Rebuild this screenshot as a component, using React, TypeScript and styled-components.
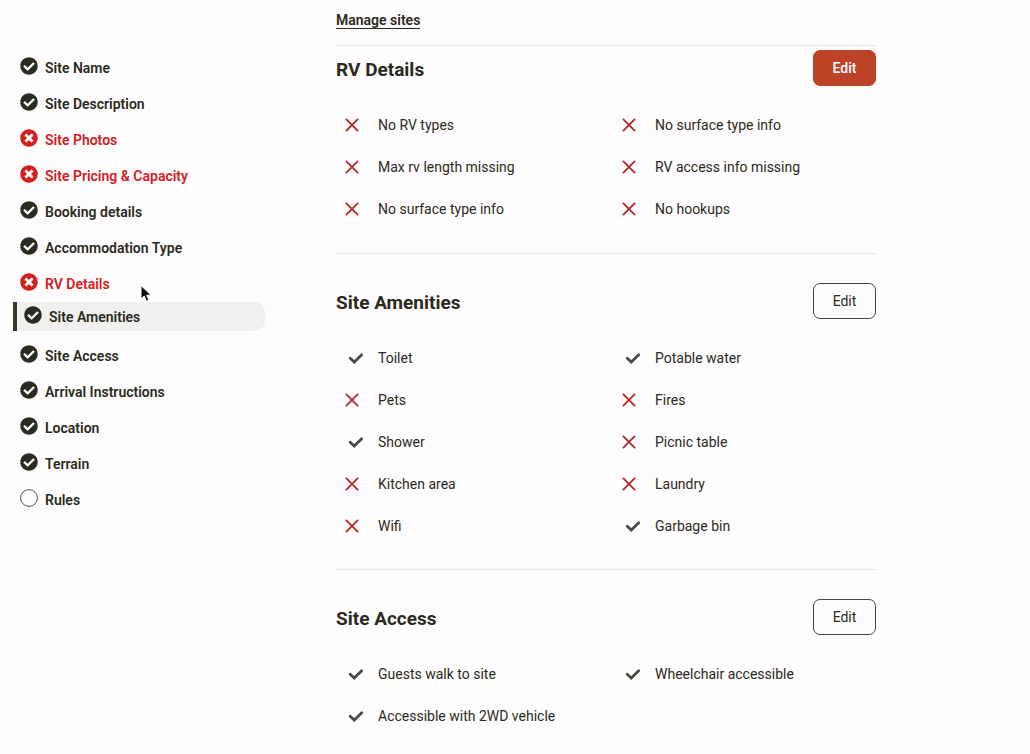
import React from "react";
import styled, { createGlobalStyle, css } from "styled-components";
import { FaCheckCircle, FaTimesCircle } from "react-icons/fa";

const ink = "#2b2a20";

const GlobalStyle = createGlobalStyle`
  *, *::before, *::after { box-sizing: border-box; }
  body {
    margin: 0;
    background: #fefcfd;
    color: ${ink};
    font-family: Roboto, "Liberation Sans", sans-serif;
    font-size: 14px;
  }
`;

const Page = styled.div`
  display: flex;
  align-items: flex-start;
  min-height: 100vh;
`;

const Sidebar = styled.nav`
  flex: none;
  width: 265px;
  margin-right: 71px;
  padding-top: 50px;
`;

const StepList = styled.ul`
  list-style: none;
  margin: 0;
  padding: 0;
`;

const Step = styled.li<{ $active?: boolean }>`
  height: 36px;
  padding-left: ${({ $active }) => ($active ? "13px" : "20px")};
`;

const StepLink = styled.a<{ $error?: boolean; $active?: boolean }>`
  display: flex;
  align-items: center;
  gap: 7px;
  height: 36px;
  color: ${({ $error }) => ($error ? "#d3201f" : ink)};
  font-weight: 600;
  line-height: 20px;
  text-decoration: none;
  white-space: nowrap;

  svg {
    flex: none;
    width: 18px;
    height: 18px;
    margin-bottom: 4px;
  }

  ${({ $active }) =>
    $active &&
    css`
      height: 29px;
      padding-left: 7px;
      border-left: 4px solid #343b28;
      border-radius: 0 10px 10px 0;
      background: #f1f0ef;
    `}
`;

const Content = styled.main`
  flex: 0 1 540px;
  min-width: 0;
`;

const TopBar = styled.div`
  height: 45px;
  padding-top: 12px;
`;

const ManageLink = styled.a`
  display: inline-block;
  border-bottom: 1px solid ${ink};
  color: ${ink};
  font-weight: 600;
  line-height: 15px;
  text-decoration: none;
`;

const Section = styled.section<{ $tight?: boolean }>`
  padding-top: ${({ $tight }) => ($tight ? "4px" : "29px")};
  padding-bottom: ${({ $tight }) => ($tight ? "23px" : "22px")};
  border-top: 1px solid #e8e9e6;

  &:last-child {
    padding-bottom: 12px;
  }
`;

const SectionHeader = styled.header`
  display: flex;
  align-items: center;
  justify-content: space-between;
  margin-bottom: 18px;
`;

const SectionTitle = styled.h2`
  margin: 0;
  padding-top: 4px;
  font-size: 19px;
  font-weight: 700;
  line-height: 24px;
`;

const EditButton = styled.button<{ $primary?: boolean }>`
  width: 63px;
  height: 36px;
  padding: 0;
  border: 1px solid ${({ $primary }) => ($primary ? "#bd4327" : "#45453c")};
  border-radius: 7px;
  background: ${({ $primary }) => ($primary ? "#bd4327" : "transparent")};
  color: ${({ $primary }) => ($primary ? "#fff" : ink)};
  font: inherit;
  font-weight: ${({ $primary }) => ($primary ? 500 : 400)};
  cursor: pointer;
`;

const FactGrid = styled.ul`
  display: grid;
  grid-template-columns: 277px 1fr;
  grid-auto-rows: 42px;
  margin: 0;
  padding: 0;
  list-style: none;
`;

const Fact = styled.li`
  display: grid;
  grid-template-columns: 42px 1fr;
  align-items: center;
  line-height: 20px;

  svg {
    display: block;
    margin-left: 8px;
  }
`;

const Cursor = styled.svg`
  position: absolute;
  left: 139px;
  top: 284px;
  pointer-events: none;
`;

const CheckMark = () => (
  <svg width="22" height="16" viewBox="0 0 22 16" aria-label="Yes">
    <path d="M6.2 8.2 10.3 12 17.7 4.8" fill="none" stroke="#4b4a42" strokeWidth="2.8" strokeLinecap="round" strokeLinejoin="miter" />
  </svg>
);

const CrossMark = () => (
  <svg width="16" height="16" viewBox="0 0 16 16" aria-label="No">
    <path d="M2.4 2.4 13.6 13.6M13.6 2.4 2.4 13.6" fill="none" stroke="#b3262a" strokeWidth="1.8" strokeLinecap="round" />
  </svg>
);

const EmptyMark = () => (
  <svg viewBox="0 0 18 18" aria-hidden="true">
    <circle cx="9" cy="9" r="8.4" fill="none" stroke="#55554f" strokeWidth="1" />
  </svg>
);

type StepStatus = "done" | "error" | "todo";

const steps: { label: string; status: StepStatus; active?: boolean }[] = [
  { label: "Site Name", status: "done" },
  { label: "Site Description", status: "done" },
  { label: "Site Photos", status: "error" },
  { label: "Site Pricing & Capacity", status: "error" },
  { label: "Booking details", status: "done" },
  { label: "Accommodation Type", status: "done" },
  { label: "RV Details", status: "error" },
  { label: "Site Amenities", status: "done", active: true },
  { label: "Site Access", status: "done" },
  { label: "Arrival Instructions", status: "done" },
  { label: "Location", status: "done" },
  { label: "Terrain", status: "done" },
  { label: "Rules", status: "todo" },
];

const sections: { title: string; primary?: boolean; facts: [string, boolean][] }[] = [
  {
    title: "RV Details",
    primary: true,
    facts: [
      ["No RV types", false],
      ["No surface type info", false],
      ["Max rv length missing", false],
      ["RV access info missing", false],
      ["No surface type info", false],
      ["No hookups", false],
    ],
  },
  {
    title: "Site Amenities",
    facts: [
      ["Toilet", true],
      ["Potable water", true],
      ["Pets", false],
      ["Fires", false],
      ["Shower", true],
      ["Picnic table", false],
      ["Kitchen area", false],
      ["Laundry", false],
      ["Wifi", false],
      ["Garbage bin", true],
    ],
  },
  {
    title: "Site Access",
    facts: [
      ["Guests walk to site", true],
      ["Wheelchair accessible", true],
      ["Accessible with 2WD vehicle", true],
    ],
  },
];

const statusIcons = {
  done: <FaCheckCircle />,
  error: <FaTimesCircle />,
  todo: <EmptyMark />,
};

export default function App() {
  return (
    <Page>
      <GlobalStyle />
      <Sidebar aria-label="Listing steps">
        <StepList>
          {steps.map(({ label, status, active }) => (
            <Step key={label} $active={active}>
              <StepLink
                href="#"
                $error={status === "error"}
                $active={active}
                aria-current={active ? "step" : undefined}
              >
                {statusIcons[status]}
                {label}
              </StepLink>
            </Step>
          ))}
        </StepList>
      </Sidebar>
      <Content>
        <TopBar>
          <ManageLink href="#">Manage sites</ManageLink>
        </TopBar>
        {sections.map(({ title, primary, facts }) => (
          <Section key={title} $tight={primary}>
            <SectionHeader>
              <SectionTitle>{title}</SectionTitle>
              <EditButton type="button" $primary={primary}>
                Edit
              </EditButton>
            </SectionHeader>
            <FactGrid>
              {facts.map(([text, ok], i) => (
                <Fact key={i}>
                  {ok ? <CheckMark /> : <CrossMark />}
                  {text}
                </Fact>
              ))}
            </FactGrid>
          </Section>
        ))}
      </Content>
      <Cursor width="14" height="20" viewBox="0 0 14 20" aria-hidden="true">
        <path d="M2 1.5V15l3.2-2.9 2.3 5.2 2.4-1-2.2-5.1h4.4z" fill="#0b0b14" stroke="#fff" strokeWidth="1" />
      </Cursor>
    </Page>
  );
}
